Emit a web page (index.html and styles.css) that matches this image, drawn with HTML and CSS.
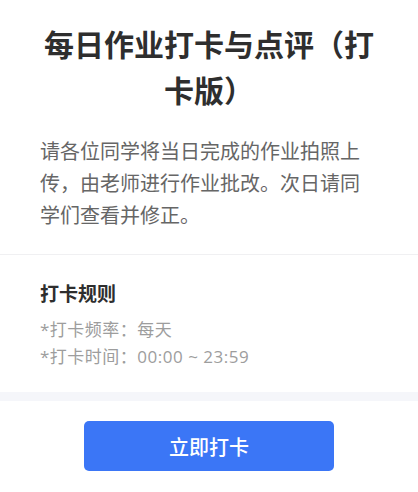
FILE: index.html
```html
<!DOCTYPE html>
<html lang="zh-CN">
<head>
<meta charset="utf-8">
<title>每日作业打卡与点评</title>
<link rel="stylesheet" href="styles.css">
</head>
<body>
<div class="page">
  <section class="intro">
    <h1 class="title">每日作业打卡与点评（打卡版）</h1>
    <p class="desc">请各位同学将当日完成的作业拍照上传，由老师进行作业批改。次日请同学们查看并修正。</p>
  </section>
  <section class="rules">
    <h2 class="rules-title">打卡规则</h2>
    <p class="rule">*打卡频率：每天</p>
    <p class="rule">*打卡时间：00:00 ~ 23:59</p>
  </section>
  <div class="band"></div>
  <div class="actions">
    <button class="btn" type="button">立即打卡</button>
  </div>
</div>
</body>
</html>
```

FILE: styles.css
```css
* { box-sizing: border-box; }
html, body {
  margin: 0;
  padding: 0;
  background: #ffffff;
}
body {
  font-family: "Noto Sans CJK SC", "Noto Sans", sans-serif;
}
.page {
  display: flex;
  flex-direction: column;
}
.intro {
  padding: 20px 40px 23px;
  border-bottom: 1px solid #f0f0f2;
}
.title {
  margin: 0;
  font-size: 30px;
  line-height: 46px;
  font-weight: 700;
  color: #2e2e2e;
  text-align: center;
}
.desc {
  margin: 23px 0 0;
  font-size: 20px;
  line-height: 32px;
  color: #666666;
}
.rules {
  padding: 24px 40px 22px;
}
.rules-title {
  margin: 0 0 9px;
  font-size: 19px;
  line-height: 28px;
  font-weight: 700;
  color: #2e2e2e;
}
.rule {
  margin: 0;
  font-family: "Open Sans", "Noto Sans CJK SC", sans-serif;
  font-size: 17px;
  line-height: 27px;
  letter-spacing: 0.5px;
  color: #9d9d9d;
}
.band {
  height: 9px;
  background: #f5f6fa;
}
.actions {
  display: flex;
  justify-content: center;
  padding-top: 20px;
}
.btn {
  width: 250px;
  height: 50px;
  border: none;
  border-radius: 5px;
  background: #3b76f6;
  color: #ffffff;
  font-family: "Noto Sans CJK SC", "Noto Sans", sans-serif;
  font-size: 20px;
  font-weight: 500;
  cursor: pointer;
}
```
